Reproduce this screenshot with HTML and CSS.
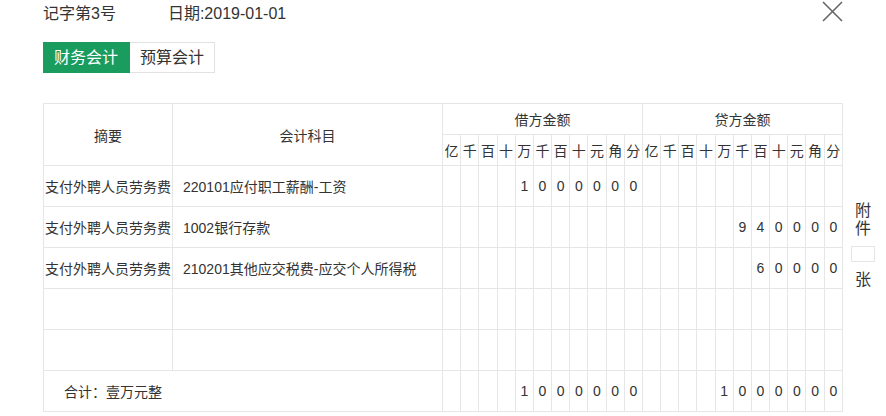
FILE: index.html
```html
<!DOCTYPE html>
<html>
<head>
<meta charset="utf-8">
<link rel="stylesheet" href="styles.css">
</head>
<body>
<div class="page">
  <div class="top">
    <span class="no">记字第3号</span>
    <span class="date">日期:2019-01-01</span>
  </div>
  <button class="close" aria-label="close">
    <svg width="21" height="21" viewBox="0 0 21 21"><path d="M1 1 L20 20 M20 1 L1 20" stroke="#666" stroke-width="1.6" fill="none"/></svg>
  </button>
  <div class="tabs">
    <span class="tab active">财务会计</span><span class="tab">预算会计</span>
  </div>
  <div class="body">
    <table class="voucher">
      <colgroup>
        <col class="c-sum"><col class="c-acc">
        <col><col><col><col><col><col><col><col><col><col><col>
        <col><col><col><col><col><col><col><col><col><col><col>
      </colgroup>
      <tr class="h1">
        <td rowspan="2">摘要</td>
        <td rowspan="2">会计科目</td>
        <td colspan="11">借方金额</td>
        <td colspan="11">贷方金额</td>
      </tr>
      <tr class="h2 units">
        <td>亿</td><td>千</td><td>百</td><td class="b">十</td><td>万</td><td>千</td><td class="b">百</td><td>十</td><td>元</td><td class="r">角</td><td>分</td>
        <td>亿</td><td>千</td><td>百</td><td class="b">十</td><td>万</td><td>千</td><td class="b">百</td><td>十</td><td>元</td><td class="r">角</td><td>分</td>
      </tr>
      <tr class="row">
        <td class="sum">支付外聘人员劳务费</td><td class="acc">220101应付职工薪酬-工资</td>
        <td></td><td></td><td></td><td class="b"></td><td>1</td><td>0</td><td class="b">0</td><td>0</td><td>0</td><td class="r">0</td><td>0</td>
        <td></td><td></td><td></td><td class="b"></td><td></td><td></td><td class="b"></td><td></td><td></td><td class="r"></td><td></td>
      </tr>
      <tr class="row">
        <td class="sum">支付外聘人员劳务费</td><td class="acc">1002银行存款</td>
        <td></td><td></td><td></td><td class="b"></td><td></td><td></td><td class="b"></td><td></td><td></td><td class="r"></td><td></td>
        <td></td><td></td><td></td><td class="b"></td><td></td><td>9</td><td class="b">4</td><td>0</td><td>0</td><td class="r">0</td><td>0</td>
      </tr>
      <tr class="row">
        <td class="sum">支付外聘人员劳务费</td><td class="acc">210201其他应交税费-应交个人所得税</td>
        <td></td><td></td><td></td><td class="b"></td><td></td><td></td><td class="b"></td><td></td><td></td><td class="r"></td><td></td>
        <td></td><td></td><td></td><td class="b"></td><td></td><td></td><td class="b">6</td><td>0</td><td>0</td><td class="r">0</td><td>0</td>
      </tr>
      <tr class="row">
        <td class="sum"></td><td class="acc"></td>
        <td></td><td></td><td></td><td class="b"></td><td></td><td></td><td class="b"></td><td></td><td></td><td class="r"></td><td></td>
        <td></td><td></td><td></td><td class="b"></td><td></td><td></td><td class="b"></td><td></td><td></td><td class="r"></td><td></td>
      </tr>
      <tr class="row">
        <td class="sum"></td><td class="acc"></td>
        <td></td><td></td><td></td><td class="b"></td><td></td><td></td><td class="b"></td><td></td><td></td><td class="r"></td><td></td>
        <td></td><td></td><td></td><td class="b"></td><td></td><td></td><td class="b"></td><td></td><td></td><td class="r"></td><td></td>
      </tr>
      <tr class="row total">
        <td colspan="2" class="tot">合计：壹万元整</td>
        <td></td><td></td><td></td><td class="b"></td><td>1</td><td>0</td><td class="b">0</td><td>0</td><td>0</td><td class="r">0</td><td>0</td>
        <td></td><td></td><td></td><td class="b"></td><td>1</td><td>0</td><td class="b">0</td><td>0</td><td>0</td><td class="r">0</td><td>0</td>
      </tr>
    </table>
    <div class="side">
      <span class="ch">附</span>
      <span class="ch">件</span>
      <span class="box"></span>
      <span class="ch">张</span>
    </div>
  </div>
</div>
</body>
</html>
```

FILE: styles.css
```css
html, body {
  margin: 0;
  padding: 0;
  background: #fff;
}
body {
  font-family: "Liberation Sans", "Noto Sans CJK SC", sans-serif;
  color: #333;
}
.page {
  position: relative;
  width: 886px;
  height: 416px;
  padding-left: 43px;
  box-sizing: border-box;
  overflow: hidden;
}
.top {
  display: flex;
  height: 28px;
  line-height: 28px;
  font-size: 16px;
}
.date {
  margin-left: 52px;
}
.close {
  position: absolute;
  left: 822px;
  top: 1px;
  width: 21px;
  height: 21px;
  padding: 0;
  border: 0;
  background: none;
}
.close svg {
  display: block;
}
.tabs {
  display: flex;
  margin-top: 14px;
  height: 31px;
}
.tab {
  display: block;
  box-sizing: border-box;
  height: 31px;
  line-height: 29px;
  padding: 0 10px;
  font-size: 16px;
  border: 1px solid #e2e2e2;
  border-left: 0;
  color: #333;
}
.tab.active {
  background: #1a9c5e;
  border-color: #1a9c5e;
  color: #fff;
  padding: 0 11px;
}
.body {
  display: flex;
  margin-top: 30px;
  gap: 8px;
}
.voucher {
  width: 800px;
  table-layout: fixed;
  border-collapse: collapse;
  font-size: 14px;
}
.c-sum { width: 129px; }
.c-acc { width: 270px; }
.voucher td {
  border: 1px solid #e6e6e6;
  padding: 0;
  text-align: center;
  vertical-align: middle;
  white-space: nowrap;
  overflow: hidden;
}
.voucher td.b { border-left-color: #a7d5f3; }
.voucher td.r { border-left-color: #f2b0b0; }
.h1 td { height: 30px; }
.h2 td { height: 30px; }
.row td { height: 40px; }
.voucher td.acc {
  text-align: left;
  padding-left: 10px;
}
.voucher td.tot {
  text-align: left;
  padding-left: 20px;
}
.side {
  display: flex;
  flex-direction: column;
  align-items: center;
  width: 24px;
  padding-top: 99px;
  font-size: 16px;
}
.ch {
  display: block;
  line-height: 18px;
  height: 18px;
}
.box {
  display: block;
  width: 24px;
  height: 16px;
  box-sizing: border-box;
  border: 1px solid #e6e6e6;
  margin: 8px 0 9px;
}
```
